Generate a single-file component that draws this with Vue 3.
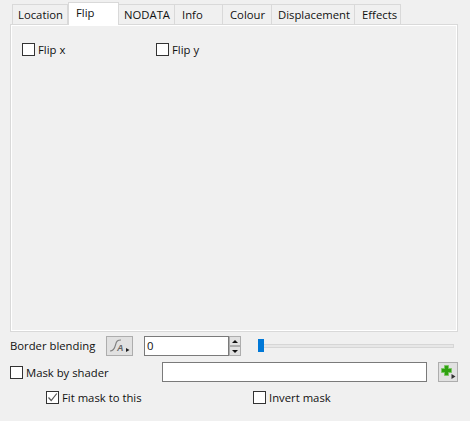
<template>
  <div class="panel">
    <div class="tabs">
      <div
        v-for="tab in tabs"
        :key="tab.name"
        :class="['tab', { active: tab.name === 'Flip' }]"
        :style="{ width: tab.width + 'px', paddingLeft: tab.pad + 'px' }"
      >{{ tab.name }}</div>
    </div>
    <div class="pane">
      <div class="flip-row">
        <label class="check flip-x"><span class="box"></span>Flip x</label>
        <label class="check"><span class="box"></span>Flip y</label>
      </div>
    </div>

    <div class="row blend-row">
      <span class="blend-label">Border blending</span>
      <button class="tool blend-btn">
        <svg width="25" height="18" viewBox="0 0 25 18">
          <path d="M3 14 C6.500 14 7.500 12 8.500 8 C9.500 4 10.500 3 14 3" fill="none" stroke="#808080" stroke-width="1.100" />
          <text x="10" y="14" class="a-glyph">A</text>
          <path d="M19 11 L22.500 13 L19 15 Z" fill="#222" />
        </svg>
      </button>
      <div class="spin">
        <div class="spin-input">0</div>
        <div class="spin-arrows">
          <div class="arrow"><span class="up"></span></div>
          <div class="arrow"><span class="down"></span></div>
        </div>
      </div>
      <div class="slider">
        <div class="track"></div>
        <div class="handle"></div>
      </div>
    </div>

    <div class="row shader-row">
      <label class="check shader-check"><span class="box"></span>Mask by shader</label>
      <div class="shader-input"></div>
      <button class="tool plus-btn">
        <svg width="18" height="18" viewBox="0 0 18 18">
          <path d="M5.500 2.500 H9.500 V5.500 H12.500 V9.500 H9.500 V12.500 H5.500 V9.500 H2.500 V5.500 H5.500 Z" fill="#2ea10f" stroke="#7cc466" stroke-width="1" />
          <path d="M12.500 11 L16.500 13.500 L12.500 16 Z" fill="#333" />
        </svg>
      </button>
    </div>

    <div class="row fit-row">
      <label class="check fit-check">
        <span class="box">
          <svg width="11" height="11" viewBox="0 0 11 11">
            <path d="M1.500 5.500 L4.200 8.500 L9.800 1.500" fill="none" stroke="#555" stroke-width="1.200" />
          </svg>
        </span>Fit mask to this
      </label>
      <label class="check"><span class="box"></span>Invert mask</label>
    </div>
  </div>
</template>

<script setup>
const tabs = [
  { name: 'Location', width: 56, pad: 5 },
  { name: 'Flip', width: 51, pad: 7 },
  { name: 'NODATA', width: 56, pad: 5 },
  { name: 'Info', width: 48, pad: 7 },
  { name: 'Colour', width: 49, pad: 7 },
  { name: 'Displacement', width: 83, pad: 6 },
  { name: 'Effects', width: 46, pad: 7 }
]
</script>

<style>
html,
body {
  margin: 0;
  background: #f0f0f0;
}
</style>

<style scoped>
.panel {
  width: 470px;
  height: 421px;
  box-sizing: border-box;
  padding: 2px 12px 0 10px;
  background: #f0f0f0;
  font-family: "Open Sans", "Noto Sans", sans-serif;
  font-size: 11.300px;
  color: #111;
  overflow: hidden;
}
.tabs {
  display: flex;
  height: 22px;
  padding-left: 2px;
  position: relative;
  z-index: 1;
}
.tab {
  box-sizing: border-box;
  height: 20px;
  margin-top: 2px;
  border: 1px solid #d9d9d9;
  border-left-width: 0;
  border-bottom: 0;
  background: #f0f0f0;
  line-height: 19px;
}
.tab:first-child {
  border-left-width: 1px;
}
.tab.active {
  height: 23px;
  margin-top: 0;
  background: #fff;
  border-left-width: 1px;
  line-height: 19px;
}
.pane {
  box-sizing: border-box;
  height: 308px;
  border: 1px solid #d9d9d9;
  box-shadow: inset 0 0 0 1px #fff;
  padding: 16px 0 0 11px;
}
.flip-row {
  display: flex;
}
.flip-x {
  width: 134px;
}
.check {
  display: flex;
  align-items: center;
  height: 16px;
  gap: 3px;
}
.box {
  box-sizing: border-box;
  display: flex;
  align-items: center;
  justify-content: center;
  width: 13px;
  height: 13px;
  background: #fff;
  border: 1px solid #333;
}
.row {
  display: flex;
  align-items: center;
}
.blend-row {
  margin-top: 3px;
  height: 22px;
}
.blend-label {
  width: 96px;
  position: relative;
  top: -1px;
}
.tool {
  box-sizing: border-box;
  display: flex;
  align-items: center;
  justify-content: center;
  padding: 0;
  background: #e1e1e1;
  border: 1px solid #adadad;
}
.blend-btn {
  width: 27px;
  height: 20px;
  margin-right: 11px;
}
.a-glyph {
  font-family: "Liberation Sans", sans-serif;
  font-size: 9px;
  font-weight: 700;
  font-style: italic;
  fill: #666;
}
.spin {
  display: flex;
  height: 20px;
  width: 98px;
}
.spin-input {
  box-sizing: border-box;
  width: 85px;
  border: 1px solid #7a7a7a;
  background: #fff;
  line-height: 18px;
  padding-left: 2px;
}
.spin-arrows {
  display: flex;
  flex-direction: column;
  width: 12px;
}
.arrow {
  box-sizing: border-box;
  flex: 1;
  background: #e1e1e1;
  border: 1px solid #adadad;
  display: flex;
  align-items: center;
  justify-content: center;
}
.up {
  border: 3px solid transparent;
  border-top-width: 0;
  border-bottom: 3px solid #111;
}
.down {
  border: 3px solid transparent;
  border-bottom-width: 0;
  border-top: 3px solid #111;
}
.slider {
  position: relative;
  width: 196px;
  height: 14px;
  margin-left: 16px;
  display: flex;
  align-items: center;
}
.track {
  box-sizing: border-box;
  width: 100%;
  height: 4px;
  background: #e7e7e7;
  border: 1px solid #d6d6d6;
}
.handle {
  position: absolute;
  left: 0;
  top: 0;
  width: 6px;
  height: 13px;
  background: #0078d7;
}
.shader-row {
  margin-top: 4px;
  height: 22px;
}
.shader-check {
  width: 152px;
}
.shader-input {
  box-sizing: border-box;
  width: 266px;
  height: 20px;
  background: #fff;
  border: 1px solid #7a7a7a;
}
.plus-btn {
  width: 20px;
  height: 20px;
  margin-left: 11px;
}
.fit-row {
  margin-top: 6px;
  height: 16px;
  padding-left: 36px;
}
.fit-check {
  width: 207px;
}
</style>
